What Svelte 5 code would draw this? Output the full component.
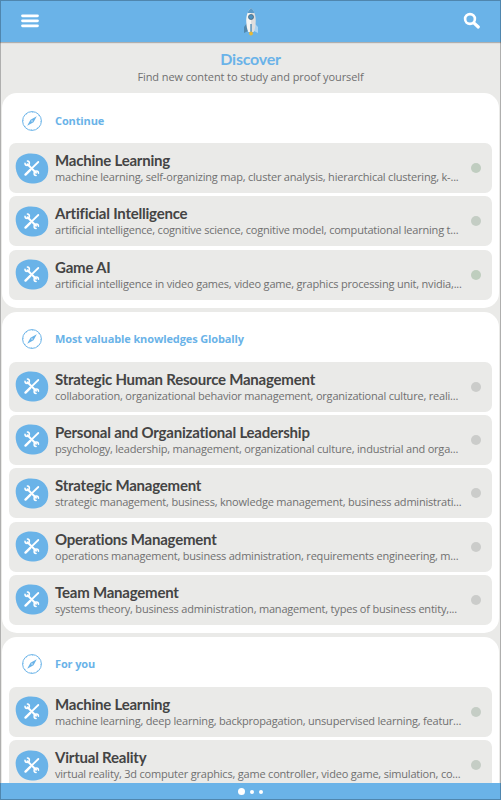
<script>
  const sections = [
    {
      title: 'Continue',
      items: [
        { name: 'Machine Learning', topics: 'machine learning, self-organizing map, cluster analysis, hierarchical clustering, k-...', color: '#c0cdc0' },
        { name: 'Artificial Intelligence', topics: 'artificial intelligence, cognitive science, cognitive model, computational learning t...', color: '#c4cdc4' },
        { name: 'Game AI', topics: 'artificial intelligence in video games, video game, graphics processing unit, nvidia,...', color: '#bfcebe' },
      ],
    },
    {
      title: 'Most valuable knowledges Globally',
      items: [
        { name: 'Strategic Human Resource Management', topics: 'collaboration, organizational behavior management, organizational culture, reali...', color: '#cbccca' },
        { name: 'Personal and Organizational Leadership', topics: 'psychology, leadership, management, organizational culture, industrial and orga...', color: '#cbccca' },
        { name: 'Strategic Management', topics: 'strategic management, business, knowledge management, business administrati...', color: '#cbccca' },
        { name: 'Operations Management', topics: 'operations management, business administration, requirements engineering, m...', color: '#cbccca' },
        { name: 'Team Management', topics: 'systems theory, business administration, management, types of business entity,...', color: '#cbccca' },
      ],
    },
    {
      title: 'For you',
      items: [
        { name: 'Machine Learning', topics: 'machine learning, deep learning, backpropagation, unsupervised learning, featur...', color: '#c5cdc5' },
        { name: 'Virtual Reality', topics: 'virtual reality, 3d computer graphics, game controller, video game, simulation, co...', color: '#c5cdc5' },
      ],
    },
  ]
</script>

<div class="app">
  <header>
    <svg class="menu" viewBox="0 0 18 14">
      <path d="M1.500 1.800h15M1.500 6.800h15M1.500 11.800h15" stroke="#fff" stroke-width="2.800" stroke-linecap="round" />
    </svg>
    <svg class="rocket" viewBox="0 0 16 30">
      <path d="M4 16L1 20v6l4-2z" fill="#5288ad" />
      <path d="M11 16l4 4v6l-4-2z" fill="#a9d4f3" />
      <path d="M8 1C4.500 4 3 9 3.300 15c.1 4 .8 7 2 10H8z" fill="#f5f5f3" />
      <path d="M8 1c3.500 3 5 8 4.700 14-.1 4-.8 7-2 10H8z" fill="#dedede" />
      <path d="M8 1C6.400 2.300 5.200 4 4.500 6h7C10.800 4 9.600 2.300 8 1z" fill="#5b9bc9" />
      <circle cx="8" cy="10" r="2.500" fill="#4d91bf" stroke="#47677d" stroke-width=".8" />
      <path d="M7.300 17h1.500v8H7.300z" fill="#5b93ba" />
      <ellipse cx="8" cy="26.500" rx="1.900" ry="2" fill="#e8b935" />
    </svg>
    <svg class="search" viewBox="0 0 18 18">
      <circle cx="7" cy="7" r="4.900" fill="none" stroke="#fff" stroke-width="2.600" />
      <path d="M10.800 10.800l4.500 4.200" stroke="#fff" stroke-width="3.200" stroke-linecap="round" />
    </svg>
  </header>

  <main>
    <div class="intro">
      <h1>Discover</h1>
      <p>Find new content to study and proof yourself</p>
    </div>

    {#each sections as section}
      <section>
        <div class="heading">
          <svg class="compass" viewBox="0 0 20 20">
            <circle cx="10" cy="10" r="9.400" fill="none" stroke="#6ab3e8" stroke-width="1" />
            <circle cx="10" cy="10" r="8.600" fill="none" stroke="#6ab3e8" stroke-width=".8" stroke-dasharray=".7 6.054" />
            <path d="M14.800 5.200L11.500 11.300 5.200 14.800 8.500 8.700z" fill="#6ab3e8" />
            <circle cx="10" cy="10" r=".7" fill="#fff" />
          </svg>
          <h2>{section.title}</h2>
        </div>
        <div class="list">
          {#each section.items as item}
            <div class="item">
              <svg class="badge" viewBox="0 0 34 31">
                <path d="M1 10C3 3 9 .5 16 .5c8 0 13 3 16 9 2 5 1.500 11-1 15-3 4.500-8 6-14 6C10 30.500 5 27 2.500 21.500.8 17.500.2 13.500 1 10z" fill="#6ab3e8" />
                <g fill="none" stroke="#fff" stroke-linecap="round">
                  <path d="M12.500 11.200l8.500 8.500" stroke-width="2" />
                  <path d="M10 10.200a2.200 2.200 0 1 0 2.400-2.200M21.100 22.500a2.200 2.200 0 1 1 2.400-2.200" stroke-width="1.500" />
                  <path d="M23.300 9l-6.800 6.700" stroke-width="1.800" />
                  <path d="M15.300 16.800l-4.800 4.800" stroke-width="2.400" />
                </g>
              </svg>
              <div class="text">
                <h3>{item.name}</h3>
                <p>{item.topics}</p>
              </div>
              <span class="dot" style="background: {item.color}"></span>
            </div>
          {/each}
        </div>
      </section>
    {/each}
  </main>

  <footer>
    <span class="current"></span>
    <span></span>
    <span></span>
  </footer>
  <div class="frame"></div>
</div>

<style>
  :global(body) {
    margin: 0;
  }
  .app {
    position: relative;
    display: flex;
    flex-direction: column;
    height: 800px;
    overflow: hidden;
    background: #eaeae8;
    font-family: 'Open Sans', sans-serif;
  }
  h1,
  h2,
  h3,
  p {
    margin: 0;
    white-space: nowrap;
  }
  header {
    z-index: 1;
    display: flex;
    flex: none;
    align-items: center;
    justify-content: space-between;
    box-sizing: border-box;
    height: 42px;
    padding: 0 20px 0 21px;
    background: #6ab3e8;
    box-shadow: 0 1px 1px rgba(0, 0, 0, 0.25);
  }
  .menu {
    width: 18px;
    height: 14px;
  }
  .rocket {
    width: 16px;
    height: 30px;
    margin-top: 2px;
  }
  .search {
    width: 18px;
    height: 18px;
  }
  main {
    flex: 1;
    min-height: 0;
    overflow: hidden;
    padding: 0 2px;
  }
  .intro {
    height: 51px;
    box-sizing: border-box;
    padding-top: 8px;
    text-align: center;
  }
  h1 {
    color: #6ab3e8;
    font: bold 16px/18px Lato, sans-serif;
    letter-spacing: -0.25px;
  }
  .intro p {
    color: #707070;
    font-size: 11px;
    line-height: 17px;
    letter-spacing: -0.1px;
  }
  section {
    margin-bottom: 4px;
    padding: 0 7px 8px;
    border-radius: 15px;
    background: #fff;
  }
  .heading {
    display: flex;
    align-items: center;
    gap: 13px;
    height: 50px;
    padding: 5px 0 0 13px;
    box-sizing: border-box;
  }
  .compass {
    width: 20px;
    height: 20px;
  }
  h2 {
    color: #6ab3e8;
    font-size: 11px;
    line-height: 16px;
    letter-spacing: -0.12px;
  }
  .list {
    display: flex;
    flex-direction: column;
    gap: 3.33px;
  }
  .item {
    display: flex;
    align-items: center;
    box-sizing: border-box;
    height: 50px;
    padding: 0 11px 0 6px;
    border-radius: 7px;
    background: #eaeae8;
  }
  .badge {
    flex: none;
    width: 34px;
    height: 31px;
  }
  .text {
    flex: 1;
    min-width: 0;
    margin-left: 6px;
  }
  h3 {
    color: #444;
    font: bold 15px/17px Lato, sans-serif;
    letter-spacing: -0.22px;
  }
  .text p {
    color: #707070;
    font-size: 11px;
    line-height: 15px;
    letter-spacing: -0.2px;
  }
  .dot {
    flex: none;
    width: 10px;
    height: 10px;
    border-radius: 50%;
  }
  footer {
    z-index: 1;
    display: flex;
    flex: none;
    align-items: center;
    justify-content: center;
    gap: 5px;
    height: 17px;
    background: #6ab3e8;
  }
  footer span {
    width: 4px;
    height: 4px;
    border-radius: 50%;
    background: #fff;
  }
  footer .current {
    width: 7px;
    height: 7px;
  }
  .frame {
    position: absolute;
    inset: 0;
    z-index: 2;
    border: 1px solid rgba(0, 0, 0, 0.25);
    pointer-events: none;
  }
</style>
